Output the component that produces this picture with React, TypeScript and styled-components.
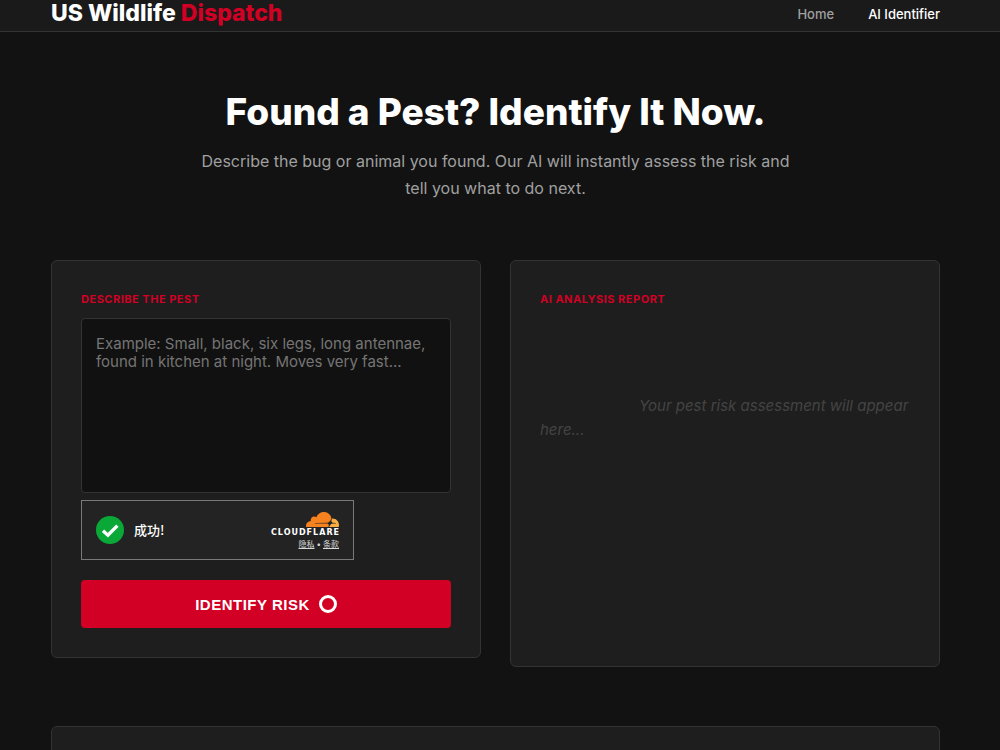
import React from "react";
import styled, { createGlobalStyle } from "styled-components";

const GlobalStyle = createGlobalStyle`
  *, *::before, *::after { box-sizing: border-box; }
  html, body { margin: 0; background: #121212; }
  body {
    color: #ffffff;
    font-family: Inter, "Liberation Sans", "Noto Sans CJK SC", sans-serif;
    font-size: 16px;
  }
`;

const Page = styled.div`
  height: 100vh;
  overflow: hidden;
`;

const Header = styled.header`
  display: flex;
  align-items: center;
  justify-content: space-between;
  height: 32px;
  padding: 0 60px 4px 51px;
  background: #1a1a1a;
  border-bottom: 1px solid #333333;
`;

const Logo = styled.a`
  color: #ffffff;
  font-size: 23px;
  line-height: 27px;
  font-weight: 800;
  text-decoration: none;
`;

const Accent = styled.span`
  color: #d20024;
`;

const Nav = styled.nav`
  display: flex;
  gap: 34px;
`;

const NavLink = styled.a<{ $active?: boolean }>`
  color: ${(p) => (p.$active ? "#ffffff" : "#a0a0a0")};
  font-size: 13px;
  line-height: 18px;
  font-weight: 500;
  text-decoration: none;
`;

const Main = styled.main`
  padding: 58px 60px 0 51px;
`;

const Hero = styled.section`
  max-width: 610px;
  margin: 0 auto 58px;
  text-align: center;
`;

const Title = styled.h1`
  margin: 0 0 14px;
  font-size: 37px;
  line-height: 44px;
  font-weight: 800;
`;

const Lead = styled.p`
  margin: 0;
  color: #a0a0a0;
  font-size: 16px;
  line-height: 27px;
`;

const Columns = styled.div`
  display: grid;
  grid-template-columns: 1fr 1fr;
  gap: 29px;
  align-items: start;
`;

const Card = styled.section<{ $minHeight?: number }>`
  min-height: ${(p) => p.$minHeight ?? 0}px;
  padding: 29px;
  background: #1e1e1e;
  border: 1px solid #333333;
  border-radius: 6px;
`;

const Form = styled.form`
  display: flex;
  flex-direction: column;
  align-items: flex-start;
`;

const Label = styled.label`
  color: #d20024;
  font-size: 11px;
  line-height: 18px;
  font-weight: 700;
  letter-spacing: 0.5px;
  text-transform: uppercase;
`;

const ReportHeading = styled(Label).attrs({ as: "h2" })`
  margin: 0;
`;

const PestInput = styled.textarea`
  display: block;
  width: 100%;
  height: 175px;
  margin: 10px 0 7px;
  padding: 16px 14px;
  resize: none;
  color: #ffffff;
  background: #111111;
  border: 1px solid #333333;
  border-radius: 4px;
  font-family: inherit;
  font-size: 15px;
  line-height: 18px;

  &::placeholder { color: #757575; }
`;

const Challenge = styled.div`
  display: flex;
  align-items: center;
  justify-content: space-between;
  width: 273px;
  height: 60px;
  padding: 0 14px;
  margin-bottom: 20px;
  background: #232323;
  border: 1px solid #797979;
`;

const Status = styled.div`
  display: flex;
  align-items: center;
  gap: 10px;
  font-family: "Noto Sans CJK SC", sans-serif;
  font-size: 13px;
  line-height: 18px;
  font-weight: 500;
`;

const Brand = styled.div`
  display: flex;
  flex-direction: column;
  align-items: flex-end;
  padding-top: 2px;
`;

const BrandName = styled.span`
  margin-right: -1px;
  font-family: "DejaVu Sans", sans-serif;
  font-size: 8px;
  line-height: 11px;
  font-weight: 700;
  letter-spacing: 1px;
`;

const Legal = styled.div`
  display: flex;
  gap: 2px;
  color: #d9d9d9;
  font-size: 8px;
  line-height: 12px;
`;

const LegalLink = styled.a`
  color: inherit;
`;

const Submit = styled.button`
  display: flex;
  align-items: center;
  justify-content: center;
  gap: 9px;
  width: 100%;
  height: 48px;
  padding: 0;
  color: #ffffff;
  background: #d20024;
  border: 0;
  border-radius: 4px;
  font-family: "Liberation Sans", sans-serif;
  font-size: 15px;
  font-weight: 700;
  letter-spacing: 0.5px;
  text-transform: uppercase;
`;

const Ring = styled.span`
  width: 18px;
  height: 18px;
  border: 3px solid #ffffff;
  border-radius: 50%;
`;

const Placeholder = styled.p`
  margin: 86px 0 0;
  color: #444444;
  font-size: 15px;
  line-height: 24px;
  font-style: italic;
  text-indent: 99px;
`;

const More = styled.div`
  margin-top: 59px;
`;

function CheckIcon() {
  return (
    <svg width="28" height="28" viewBox="0 0 28 28" aria-hidden="true">
      <circle cx="14" cy="14" r="14" fill="#0aa837" />
      <path d="M7 14.8 11.9 19.2 21.4 9.6" fill="none" stroke="#ffffff" strokeWidth="3.4" />
    </svg>
  );
}

function CloudIcon() {
  return (
    <svg width="33" height="15" viewBox="0 6.6 24 10.9" aria-hidden="true">
      <path
        fill="#f6821f"
        d="M16.5088 16.8447c.1475-.5068.0908-.9707-.1553-1.3154-.2246-.3164-.6045-.499-1.0615-.5205l-8.6592-.1123a.1559.1559 0 0 1-.1333-.0713c-.0283-.042-.0351-.0986-.021-.1553.0278-.084.1123-.1484.2036-.1562l8.7359-.1123c1.0351-.0489 2.1601-.8868 2.5537-1.9136l.499-1.3013c.0215-.0561.0293-.1128.0147-.168-.5625-2.5463-2.835-4.4453-5.5499-4.4453-2.5039 0-4.6284 1.6177-5.3876 3.8614-.4927-.3658-1.1187-.5625-1.794-.499-1.2026.119-2.1665 1.083-2.2861 2.2856-.0283.31-.0069.6128.0635.894C1.5683 13.171 0 14.7754 0 16.752c0 .1748.0142.3515.0352.5273.0141.083.0844.1475.1689.1475h15.9814c.0909 0 .1758-.0645.2032-.1553l.12-.4268z"
      />
      <path
        fill="#fbad41"
        d="M19.2656 11.2813c-.0771 0-.1611 0-.2383.0112-.0566 0-.1054.0415-.127.0976l-.3378 1.1744c-.1475.5068-.0918.9707.1543 1.3164.2256.3164.6055.498 1.0625.5195l1.8437.1133c.0557 0 .1055.0263.1329.0703.0283.043.0351.1074.0214.1562-.0283.084-.1132.1485-.204.1553l-1.921.1123c-1.041.0488-2.1582.8867-2.5527 1.914l-.1406.3585c-.0283.0713.0215.1416.0986.1416h6.5977c.0771 0 .1474-.0489.169-.126.1122-.4082.1757-.837.1757-1.2803 0-2.6025-2.125-4.727-4.7344-4.727"
      />
    </svg>
  );
}

export default function App() {
  return (
    <Page>
      <GlobalStyle />
      <Header>
        <Logo href="#">
          US Wildlife <Accent>Dispatch</Accent>
        </Logo>
        <Nav>
          <NavLink href="#">Home</NavLink>
          <NavLink href="#identifier" $active>
            AI Identifier
          </NavLink>
        </Nav>
      </Header>
      <Main>
        <Hero>
          <Title>Found a Pest? Identify It Now.</Title>
          <Lead>
            Describe the bug or animal you found. Our AI will instantly assess the risk and tell you what to do next.
          </Lead>
        </Hero>
        <Columns>
          <Card>
            <Form onSubmit={(e) => e.preventDefault()}>
              <Label htmlFor="pest">Describe the pest</Label>
              <PestInput
                id="pest"
                placeholder="Example: Small, black, six legs, long antennae, found in kitchen at night. Moves very fast..."
              />
              <Challenge>
                <Status>
                  <CheckIcon />
                  <span>成功!</span>
                </Status>
                <Brand>
                  <CloudIcon />
                  <BrandName>CLOUDFLARE</BrandName>
                  <Legal>
                    <LegalLink href="#privacy">隐私</LegalLink>
                    <span>•</span>
                    <LegalLink href="#terms">条款</LegalLink>
                  </Legal>
                </Brand>
              </Challenge>
              <Submit type="submit">
                Identify Risk
                <Ring />
              </Submit>
            </Form>
          </Card>
          <Card $minHeight={407}>
            <ReportHeading>AI Analysis Report</ReportHeading>
            <Placeholder>Your pest risk assessment will appear here...</Placeholder>
          </Card>
        </Columns>
        <More>
          <Card $minHeight={200} />
        </More>
      </Main>
    </Page>
  );
}
